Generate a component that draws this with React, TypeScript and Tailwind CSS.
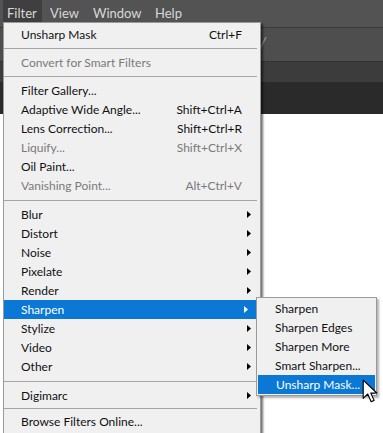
import React from "react";

type Item =
  | { kind: "sep"; h: string }
  | { kind: "item"; label: string; shortcut?: string; disabled?: boolean; sub?: boolean; active?: boolean };

const mainItems: Item[] = [
  { kind: "item", label: "Unsharp Mask", shortcut: "Ctrl+F" },
  { kind: "sep", h: "h-[9px]" },
  { kind: "item", label: "Convert for Smart Filters", disabled: true },
  { kind: "sep", h: "h-[9px]" },
  { kind: "item", label: "Filter Gallery..." },
  { kind: "item", label: "Adaptive Wide Angle...", shortcut: "Shift+Ctrl+A" },
  { kind: "item", label: "Lens Correction...", shortcut: "Shift+Ctrl+R" },
  { kind: "item", label: "Liquify...", shortcut: "Shift+Ctrl+X", disabled: true },
  { kind: "item", label: "Oil Paint..." },
  { kind: "item", label: "Vanishing Point...", shortcut: "Alt+Ctrl+V", disabled: true },
  { kind: "sep", h: "h-[10px]" },
  { kind: "item", label: "Blur", sub: true },
  { kind: "item", label: "Distort", sub: true },
  { kind: "item", label: "Noise", sub: true },
  { kind: "item", label: "Pixelate", sub: true },
  { kind: "item", label: "Render", sub: true },
  { kind: "item", label: "Sharpen", sub: true, active: true },
  { kind: "item", label: "Stylize", sub: true },
  { kind: "item", label: "Video", sub: true },
  { kind: "item", label: "Other", sub: true },
  { kind: "sep", h: "h-[10px]" },
  { kind: "item", label: "Digimarc", sub: true },
  { kind: "sep", h: "h-[7px]" },
  { kind: "item", label: "Browse Filters Online..." },
];

const subItems = ["Sharpen", "Sharpen Edges", "Sharpen More", "Smart Sharpen...", "Unsharp Mask..."];

function Arrow({ light }: { light?: boolean }) {
  return (
    <svg width="4" height="7" viewBox="0 0 4 7" className="absolute right-[9px] top-[6px]">
      <path d="M0 0 L4 3.5 L0 7 Z" fill={light ? "#ffffff" : "#000000"} />
    </svg>
  );
}

function MenuRow({ item }: { item: Item }) {
  if (item.kind === "sep") {
    return (
      <div className={`${item.h} flex items-center pr-[3px]`}>
        <div className="h-px w-full bg-[#a6a6a6]" />
      </div>
    );
  }
  const color = item.active ? "text-white" : item.disabled ? "text-[#7a7a7a]" : "text-[#111]";
  return (
    <div className={`relative flex h-[19px] items-center pl-[17px] pr-[18px] ${item.active ? "bg-[#0a78d4] mr-[3px]" : ""} ${color}`}>
      <span className="flex-1">{item.label}</span>
      {item.shortcut && <span>{item.shortcut}</span>}
      {item.sub && <Arrow light={item.active} />}
    </div>
  );
}

function Cursor() {
  return (
    <svg width="16" height="25" viewBox="0 0 14 22" className="absolute left-[362px] top-[379px]">
      <path
        d="M1 1 L1 17 L5 13.2 L8 20 L10.6 18.8 L7.7 12.3 L13 12.3 Z"
        fill="#ffffff"
        stroke="#000000"
        strokeWidth="1"
        strokeLinejoin="round"
      />
    </svg>
  );
}

export default function App() {
  return (
    <div
      className="relative h-[433px] w-[383px] overflow-hidden bg-white text-[12px]"
      style={{ fontFamily: 'Lato, "Noto Sans", Arial, sans-serif' }}
    >
      {/* app chrome behind the menu */}
      <div className="flex h-[27px] items-start bg-[#535353] pl-[3px] text-[13px] leading-none text-[#d8d8d8]">
        <div className="h-[22px] w-[39px] bg-[#3f3f3f] pl-[4px] pt-[7px]">Filter</div>
        <div className="h-[22px] w-[51px] pl-[8px] pt-[7px]">View</div>
        <div className="h-[22px] w-[62px] pl-[0px] pt-[7px]">Window</div>
        <div className="h-[22px] pl-[0px] pt-[7px]">Help</div>
      </div>
      <div className="h-px bg-[#3a3a3a]" />
      <div className="relative h-[33px] bg-[#4e4e4e]">
        <svg width="10" height="16" viewBox="0 0 10 16" className="absolute left-[258px] top-[8px]">
          <path d="M8 1 L3 11 M3 11 L2 15" stroke="#8a8a8a" strokeWidth="1.5" fill="none" />
        </svg>
      </div>
      <div className="h-px bg-[#333333]" />
      <div className="h-[20px] bg-[#3c3c3c]" />
      <div className="h-[32px] bg-[#2a2a2a]" />

      {/* Filter menu */}
      <div className="absolute left-[3px] top-[22px] w-[258px] border border-[#9a9a9a] bg-[#f0f0f0] pt-[2px] shadow-[2px_2px_2px_rgba(0,0,0,0.55)]">
        {mainItems.map((it, i) => (
          <MenuRow key={i} item={it} />
        ))}
        <div className="h-[20px]" />
      </div>

      {/* Sharpen submenu */}
      <div className="absolute left-[256px] top-[297px] w-[121px] border border-[#9a9a9a] bg-[#f0f0f0] py-[1px] shadow-[2px_2px_2px_rgba(0,0,0,0.3)]">
        {subItems.map((s, i) => (
          <div
            key={s}
            className={`flex h-[19px] items-center pl-[18px] ${
              i === subItems.length - 1 ? "mx-[1px] bg-[#0a78d4] pl-[17px] text-white" : "text-[#111]"
            }`}
          >
            {s}
          </div>
        ))}
      </div>

      <Cursor />
    </div>
  );
}
